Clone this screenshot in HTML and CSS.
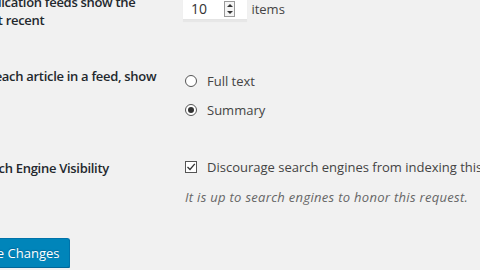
FILE: index.html
```html
<!DOCTYPE html>
<html lang="en">
<head>
    <meta charset="UTF-8">
    <title>Reading Settings</title>
    <link rel="stylesheet" href="styles.css">
</head>
<body>
    <form class="settings">
        <div class="row">
            <div class="label">Syndication feeds show the<br>most recent</div>
            <div class="field">
                <span class="number-box">
                    <span class="number-value">10</span>
                    <span class="spinner"><span class="up"></span><span class="down"></span></span>
                </span>
                <span class="unit">items</span>
            </div>
        </div>

        <div class="row">
            <div class="label">For each article in a feed, show</div>
            <div class="field">
                <label class="option"><span class="radio"></span>Full text</label>
                <label class="option"><span class="radio checked"></span>Summary</label>
            </div>
        </div>

        <div class="row">
            <div class="label">Search Engine Visibility</div>
            <div class="field">
                <label class="option nowrap"><span class="checkbox">
                    <svg width="10" height="10" viewBox="0 0 10 10"><path d="M1.5 5 L4 7.5 L8.8 1.8" fill="none" stroke="#333" stroke-width="1.3"/></svg>
                </span>Discourage search engines from indexing this site</label>
                <p class="description">It is up to search engines to honor this request.</p>
            </div>
        </div>

        <div class="submit">
            <button type="button" class="button-primary">Save Changes</button>
        </div>
    </form>
</body>
</html>
```

FILE: styles.css
```css
body {
    margin: 0;
    background: #f1f1f1;
    font-family: "Open Sans", "Noto Sans", sans-serif;
    font-size: 13px;
    color: #444;
    overflow: hidden;
}

.settings {
    margin: -27px 0 0 -35px;
    width: 600px;
}

.row {
    display: flex;
}

.label {
    width: 210px;
    padding: 20px 10px 18px 7px;
    box-sizing: border-box;
    flex: none;
    line-height: 18px;
    font-weight: 600;
    letter-spacing: -0.3px;
    color: #23282d;
}

.field {
    padding: 19px 10px 15px;
    line-height: 18px;
}

/* number input */
.number-box {
    display: inline-flex;
    align-items: center;
    width: 64px;
    height: 28px;
    box-sizing: border-box;
    background: #fff;
    border-bottom: 1px solid #e4e4e4;
    box-shadow: 0 2px 1px rgba(0, 0, 0, 0.04);
    padding: 0 12px 0 8px;
    margin-left: -2px;
    vertical-align: top;
    margin-right: 1px;
}

.number-value {
    flex: 1;
    color: #333;
    font-size: 14px;
    padding-top: 6px;
}

.spinner {
    width: 11px;
    height: 16px;
    margin-top: 6px;
    border: 1px solid #999;
    box-sizing: border-box;
    display: flex;
    flex-direction: column;
    align-items: center;
    justify-content: space-around;
    background: #f4f4f4;
}

.up, .down {
    width: 0;
    height: 0;
    border-left: 3px solid transparent;
    border-right: 3px solid transparent;
}

.up { border-bottom: 3px solid #333; }
.down { border-top: 3px solid #333; }

.unit {
    display: inline-block;
    line-height: 28px;
    padding-top: 3px;
}

/* radios and checkbox */
.option {
    display: flex;
    align-items: center;
    height: 29px;
    gap: 10px;
}

.nowrap {
    height: 18px;
    white-space: nowrap;
}

.radio, .checkbox {
    width: 12px;
    height: 12px;
    box-sizing: border-box;
    border: 1px solid #555;
    background: #fff;
    flex: none;
    display: flex;
    align-items: center;
    justify-content: center;
}

.radio {
    border-radius: 50%;
}

.radio.checked::before {
    content: "";
    width: 6px;
    height: 6px;
    border-radius: 50%;
    background: #333;
}

.checkbox svg {
    display: block;
}

.description {
    margin: 12px 0 0;
    font-style: italic;
    letter-spacing: 0.3px;
    color: #666;
    white-space: nowrap;
}

/* save button */
.submit {
    padding-top: 17px;
}

.button-primary {
    height: 30px;
    padding: 0 10px 1px;
    font-family: inherit;
    font-size: 13px;
    color: #fff;
    background: #0085ba;
    border: 1px solid #0073aa;
    border-bottom-color: #006799;
    border-radius: 3px;
    box-shadow: 0 1px 0 #006799;
    text-shadow: 0 -1px 1px #006799;
}
```
